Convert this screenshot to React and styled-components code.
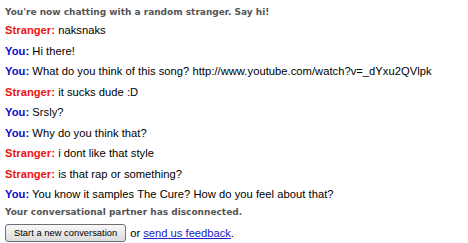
import React from "react";
import styled, { createGlobalStyle } from "styled-components";

const Global = createGlobalStyle`
  html, body { margin: 0; padding: 0; background: #fff; }
  body { font-family: "Liberation Sans", Arial, sans-serif; font-size: 11px; color: #000; }
`;

const Log = styled.div`
  padding: 3px 5px 0 5px;
  display: flex;
  flex-direction: column;
`;

const Status = styled.div`
  font-family: "DejaVu Sans", Verdana, sans-serif;
  font-weight: bold;
  font-size: 9px;
  color: #555;
  line-height: 16px;
  margin: ${(p) => p.$m || "0"};
`;

const Line = styled.div`
  line-height: 20.5px;
  font-size: 11.2px;
  letter-spacing: 0.03px;
  white-space: nowrap;
`;

const Who = styled.strong`
  color: ${(p) => (p.$you ? "#0c0cc4" : "#ee1111")};
`;

const Actions = styled.div`
  display: flex;
  align-items: center;
  gap: 3px;
  margin-top: 4px;
  font-size: 11.2px;
`;

const Button = styled.button`
  font-family: "Liberation Sans", Arial, sans-serif;
  font-size: 9.4px;
  height: 18px;
  padding: 0 8px;
  margin-right: 1px;
  border: 1px solid #707070;
  border-radius: 3px;
  background: linear-gradient(#f8f8f8, #dcdcdc);
  color: #000;
`;

const Link = styled.a`
  color: #2020c8;
  text-decoration: underline;
`;

const msgs = [
  [false, "naksnaks"],
  [true, "Hi there!"],
  [true, "What do you think of this song? http://www.youtube.com/watch?v=_dYxu2QVlpk"],
  [false, "it sucks dude :D"],
  [true, "Srsly?"],
  [true, "Why do you think that?"],
  [false, "i dont like that style"],
  [false, "is that rap or something?"],
  [true, "You know it samples The Cure? How do you feel about that?"],
];

export default function App() {
  return (
    <>
      <Global />
      <Log>
        <Status $m="1px 0 0 0">You're now chatting with a random stranger. Say hi!</Status>
        {msgs.map(([you, text], i) => (
          <Line key={i}>
            <Who $you={you}>{you ? "You:" : "Stranger:"}</Who> {text}
          </Line>
        ))}
        <Status $m="-1px 0 0 0">Your conversational partner has disconnected.</Status>
        <Actions>
          <Button>Start a new conversation</Button>
          <span>
            or <Link href="#">send us feedback</Link>.
          </span>
        </Actions>
      </Log>
    </>
  );
}
